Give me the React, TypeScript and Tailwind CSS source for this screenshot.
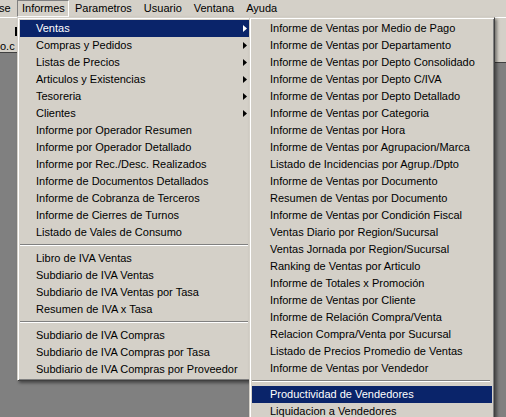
import React from 'react';

type Entry = { label: string; sub?: boolean; active?: boolean } | 'sep';

const mainItems: Entry[] = [
  { label: 'Ventas', sub: true, active: true },
  { label: 'Compras y Pedidos', sub: true },
  { label: 'Listas de Precios', sub: true },
  { label: 'Articulos y Existencias', sub: true },
  { label: 'Tesoreria', sub: true },
  { label: 'Clientes', sub: true },
  { label: 'Informe por Operador Resumen' },
  { label: 'Informe por Operador Detallado' },
  { label: 'Informe por Rec./Desc. Realizados' },
  { label: 'Informe de Documentos Detallados' },
  { label: 'Informe de Cobranza de Terceros' },
  { label: 'Informe de Cierres de Turnos' },
  { label: 'Listado de Vales de Consumo' },
  'sep',
  { label: 'Libro de IVA Ventas' },
  { label: 'Subdiario de IVA Ventas' },
  { label: 'Subdiario de IVA Ventas por Tasa' },
  { label: 'Resumen de IVA x Tasa' },
  'sep',
  { label: 'Subdiario de IVA Compras' },
  { label: 'Subdiario de IVA Compras por Tasa' },
  { label: 'Subdiario de IVA Compras por Proveedor' },
];

const subItems: Entry[] = [
  { label: 'Informe de Ventas por Medio de Pago' },
  { label: 'Informe de Ventas por Departamento' },
  { label: 'Informe de Ventas por Depto Consolidado' },
  { label: 'Informe de Ventas por Depto C/IVA' },
  { label: 'Informe de Ventas por Depto Detallado' },
  { label: 'Informe de Ventas por Categoria' },
  { label: 'Informe de Ventas por Hora' },
  { label: 'Informe de Ventas por Agrupacion/Marca' },
  { label: 'Listado de Incidencias por Agrup./Dpto' },
  { label: 'Informe de Ventas por Documento' },
  { label: 'Resumen de Ventas por Documento' },
  { label: 'Informe de Ventas por Condición Fiscal' },
  { label: 'Ventas Diario por Region/Sucursal' },
  { label: 'Ventas Jornada por Region/Sucursal' },
  { label: 'Ranking de Ventas por Articulo' },
  { label: 'Informe de Totales x Promoción' },
  { label: 'Informe de Ventas por Cliente' },
  { label: 'Informe de Relación Compra/Venta' },
  { label: 'Relacion Compra/Venta por Sucursal' },
  { label: 'Listado de Precios Promedio de Ventas' },
  { label: 'Informe de Ventas por Vendedor' },
  'sep',
  { label: 'Productividad de Vendedores', active: true },
  { label: 'Liquidacion a Vendedores' },
];

const menuBox =
  'absolute bg-[#d4d0c8] border border-t-[#d4d0c8] border-l-[#d4d0c8] border-r-[#404040] border-b-[#404040] p-[2px] shadow-[inset_1px_1px_0_#ffffff,inset_-1px_-1px_0_#808080,2px_2px_3px_rgba(0,0,0,0.45)]';

const Arrow = ({ white }: { white?: boolean }) => (
  <svg width="4" height="7" viewBox="0 0 4 7" className="shrink-0">
    <polygon points="0,0 4,3.5 0,7" fill={white ? '#ffffff' : '#000000'} />
  </svg>
);

const MenuList = ({ items, gutter }: { items: Entry[]; gutter: string }) => (
  <div className="flex flex-col">
    {items.map((it, i) =>
      it === 'sep' ? (
        <div key={i} className="h-[9px] pt-[3px] pr-[2px]">
          <div className="h-px bg-[#808080]" />
          <div className="h-px bg-white" />
        </div>
      ) : (
        <div
          key={i}
          className={`flex items-center justify-between h-[17px] ${gutter} pr-[3px] whitespace-nowrap ${
            it.active ? 'bg-[#0a246a] text-white' : 'text-black'
          }`}
        >
          <span className="leading-[17px]">{it.label}</span>
          {it.sub && <Arrow white={it.active} />}
        </div>
      )
    )}
  </div>
);

export default function App() {
  const bar = ['Parametros', 'Usuario', 'Ventana', 'Ayuda'];
  return (
    <div
      className="relative w-[506px] h-[417px] overflow-hidden bg-[#808080] text-[11px] select-none"
      style={{ fontFamily: "'Liberation Sans', Arial, sans-serif" }}
    >
      {/* menu bar */}
      <div className="flex h-[17px] bg-[#d4d0c8] items-stretch">
        <div className="w-[18px] leading-[17px] -ml-[1px]">se</div>
        <div className="w-[52px] border border-t-[#808080] border-l-[#808080] border-r-white border-b-white leading-[15px] pl-[4px]">
          Informes
        </div>
        {bar.map((b) => (
          <div key={b} className="leading-[17px] px-[6px]">
            {b}
          </div>
        ))}
      </div>

      {/* window area under the bar */}
      <div className="flex justify-between items-start">
        <div className="w-[250px] h-[36px] bg-[#d4d0c8] border-t border-white border-b border-b-[#404040] relative">
          <div className="absolute left-[15px] top-[9px] w-[2px] h-[9px] bg-black" />
          <div className="absolute left-0 top-[21px] leading-[14px] text-black">o.c</div>
        </div>
        <div className="w-[40px] h-[46px] bg-[#d4d0c8] border-t border-white border-b border-b-[#404040]" />
      </div>

      {/* Informes dropdown */}
      <div className={`${menuBox} left-[17px] top-[17px] w-[236px]`}>
        <MenuList items={mainItems} gutter="pl-[16px]" />
      </div>

      {/* Ventas submenu */}
      <div className={`${menuBox} left-[249px] top-[17px] w-[246px]`}>
        <MenuList items={subItems} gutter="pl-[18px]" />
      </div>
    </div>
  );
}
